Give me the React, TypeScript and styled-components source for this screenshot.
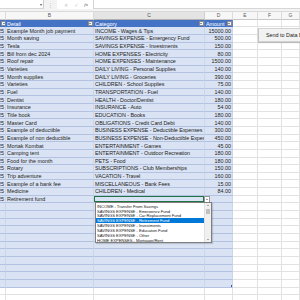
import React from 'react';
import styled, { createGlobalStyle, css } from 'styled-components';

const Global = createGlobalStyle`
  html, body { margin: 0; padding: 0; background: #ffffff; }
  body { font-family: "Liberation Sans", Arial, sans-serif; overflow: hidden; }
`;

const COLS = '6px 88px 111px 28px 25px 24px 1fr';
const ROW_H = 7.67;

type Entry = { detail: string; category: string; amount: string };

const entries: Entry[] = [
  { detail: 'Example Month job payment', category: 'INCOME - Wages & Tips', amount: '15000.00' },
  { detail: 'Month saving', category: 'SAVINGS EXPENSE - Emergency Fund', amount: '500.00' },
  { detail: 'Tesla', category: 'SAVINGS EXPENSE - Investments', amount: '150.00' },
  { detail: 'Bill from dec 2024', category: 'HOME EXPENSES - Electricity', amount: '80.00' },
  { detail: 'Roof repair', category: 'HOME EXPENSES - Maintenance', amount: '1500.00' },
  { detail: 'Varieties', category: 'DAILY LIVING - Personal Supplies', amount: '140.00' },
  { detail: 'Month supplies', category: 'DAILY LIVING - Groceries', amount: '390.00' },
  { detail: 'Varieties', category: 'CHILDREN - School Supplies', amount: '75.00' },
  { detail: 'Fuel', category: 'TRANSPORTATION - Fuel', amount: '140.00' },
  { detail: 'Dentist', category: 'HEALTH - Doctor/Dentist', amount: '180.00' },
  { detail: 'Insurance', category: 'INSURANCE - Auto', amount: '54.00' },
  { detail: 'Title book', category: 'EDUCATION - Books', amount: '180.00' },
  { detail: 'Master Card', category: 'OBLIGATIONS - Credit Card Debt', amount: '140.00' },
  { detail: 'Example of deductible', category: 'BUSINESS EXPENSE - Deductible Expenses', amount: '300.00' },
  { detail: 'Example of non deductible', category: 'BUSINESS EXPENSE - Non-Deductible Expense', amount: '450.00' },
  { detail: 'Mortak Kombat', category: 'ENTERTAINMENT - Games', amount: '45.00' },
  { detail: 'Camping tent', category: 'ENTERTAINMENT - Outdoor Recreation', amount: '180.00' },
  { detail: 'Food for the month', category: 'PETS - Food', amount: '180.00' },
  { detail: 'Rotary', category: 'SUBSCRIPTIONS - Club Memberships', amount: '150.00' },
  { detail: 'Trip adventure', category: 'VACATION - Travel', amount: '160.00' },
  { detail: 'Example of  a bank fee', category: 'MISCELLANEOUS - Bank Fees', amount: '15.00' },
  { detail: 'Medicine', category: 'CHILDREN - Medical', amount: '84.00' },
  { detail: 'Retirement fund', category: '', amount: '' },
];

const options = [
  'INCOME - Transfer From Savings',
  'SAVINGS EXPENSE - Emergency Fund',
  'SAVINGS EXPENSE - Car Replacement Fund',
  'SAVINGS EXPENSE - Retirement Fund',
  'SAVINGS EXPENSE - Investments',
  'SAVINGS EXPENSE - Education Fund',
  'SAVINGS EXPENSE - Other',
  'HOME EXPENSES - Mortgage/Rent',
];

const EMPTY_TABLE_ROWS = 11;
const PLAIN_ROWS = 2;

const Screen = styled.div`
  position: relative;
  width: 300px;
  height: 300px;
  overflow: hidden;
  background: #ffffff;
  color: #1c1c1c;
  font-family: "Liberation Sans", Arial, sans-serif;
`;

/* ---------- formula bar ---------- */
const FormulaBar = styled.div`
  display: flex;
  height: 11.5px;
  box-sizing: border-box;
  padding-bottom: 1.5px;
  background: #f3f3f3;
  border-bottom: 1px solid #dadada;
`;

const NameBox = styled.div`
  width: 44px;
  background: #ffffff;
  border-right: 1px solid #cfcfcf;
  border-bottom: 1px solid #d6d6d6;
  display: flex;
  justify-content: flex-end;
  align-items: center;
  padding-right: 1px;
  box-sizing: border-box;
  font-size: 4px;
  color: #555;
`;

const Grip = styled.div`
  width: 13px;
  display: flex;
  justify-content: center;
  align-items: center;
  font-size: 5px;
  color: #b5b5b5;
`;

const FxBox = styled.div`
  width: 37px;
  background: #ffffff;
  border-right: 1px solid #d3d3d3;
  display: flex;
  align-items: center;
  justify-content: space-around;
  padding: 0 2px 0 4px;
  box-sizing: border-box;
  font-size: 5px;
`;

const FxIcon = styled.span<{ $dim?: boolean }>`
  color: ${p => (p.$dim ? '#c4c4c4' : '#555')};
  font-style: ${p => (p.$dim ? 'normal' : 'italic')};
  font-family: ${p => (p.$dim ? '"DejaVu Sans", sans-serif' : '"Liberation Serif", serif')};
`;

const FormulaInput = styled.div`
  flex: 1;
  background: #ffffff;
  border-bottom: 1px solid #d6d6d6;
`;

/* ---------- grid ---------- */
const Sheet = styled.div`
  display: flex;
  flex-direction: column;
`;

const GridRow = styled.div<{ $h?: number }>`
  display: grid;
  grid-template-columns: ${COLS};
  height: ${p => p.$h ?? ROW_H}px;
`;

type Tone = 'letter' | 'letterActive' | 'head' | 'body' | 'plain';

const Cell = styled.div<{
  $tone: Tone;
  $align?: 'left' | 'right' | 'center';
  $active?: boolean;
  $tight?: boolean;
  $handle?: boolean;
}>`
  position: relative;
  box-sizing: border-box;
  display: flex;
  align-items: center;
  white-space: nowrap;
  overflow: hidden;
  font-size: 5.4px;
  padding: 0 1px;
  letter-spacing: ${p => (p.$tight ? '-0.06px' : 'normal')};
  justify-content: ${p => (p.$align === 'right' ? 'flex-end' : p.$align === 'center' ? 'center' : 'flex-start')};
  ${p => p.$tone === 'letter' && css`
    background: #f7f7f7;
    color: #5a5a5a;
    border-right: 1px solid #dcdcdc;
    border-bottom: 1px solid #c8c8c8;
    font-size: 5px;
  `}
  ${p => p.$tone === 'letterActive' && css`
    background: #e4e4e4;
    color: #4a4a4a;
    border-right: 1px solid #d0d0d0;
    border-bottom: 1px solid #b0b0b0;
    font-size: 5px;
  `}
  ${p => p.$tone === 'head' && css`
    background: #4472c4;
    color: #ffffff;
    border-right: 1px solid #5a82c9;
    justify-content: space-between;
    padding: 0 0 0 1px;
  `}
  ${p => p.$tone === 'body' && css`
    background: #dae3f3;
    border-bottom: 1px solid #b3c2e0;
    border-right: 1px solid #cbd6ec;
  `}
  ${p => p.$tone === 'plain' && css`
    background: #ffffff;
    border-bottom: 1px solid #e2e2e2;
    border-right: 1px solid #e2e2e2;
  `}
  ${p => p.$active && css`
    overflow: visible;
    z-index: 3;
    box-shadow: inset 0 0 0 1px #217346;
  `}
  ${p => p.$handle && css`
    overflow: visible;
  `}
`;

const FilterButton = styled.span`
  flex: none;
  width: 5px;
  height: 5px;
  margin-right: 0.5px;
  background: #f2f2f2;
  border: 0.5px solid #8c8c8c;
  box-sizing: border-box;
  display: flex;
  align-items: center;
  justify-content: center;
  &::after {
    content: '';
    border-left: 1.2px solid transparent;
    border-right: 1.2px solid transparent;
    border-top: 1.4px solid #333;
  }
`;

const HeadLabel = styled.span`
  overflow: hidden;
`;

/* ---------- data-validation dropdown ---------- */
const ListArrow = styled.div`
  position: absolute;
  left: 100%;
  top: 0.5px;
  width: 6px;
  height: 6.5px;
  box-sizing: border-box;
  background: #ffffff;
  border: 0.5px solid #9a9a9a;
  display: flex;
  align-items: center;
  justify-content: center;
  &::after {
    content: '';
    border-left: 1.2px solid transparent;
    border-right: 1.2px solid transparent;
    border-top: 1.4px solid #444;
  }
`;

const ListBox = styled.div`
  position: absolute;
  top: 100%;
  left: 1px;
  width: 116.5px;
  height: 41px;
  box-sizing: border-box;
  background: #ffffff;
  border: 0.5px solid #7f7f7f;
  box-shadow: 1px 1px 1px rgba(0, 0, 0, 0.15);
  display: flex;
`;

const ListItems = styled.div`
  flex: 1;
  display: flex;
  flex-direction: column;
  padding-top: 0.3px;
`;

const ListItem = styled.div<{ $selected?: boolean }>`
  height: 5.05px;
  display: flex;
  align-items: center;
  padding-left: 1px;
  font-size: 4.2px;
  color: ${p => (p.$selected ? '#ffffff' : '#222')};
  background: ${p => (p.$selected ? '#0078d7' : 'transparent')};
  white-space: nowrap;
  overflow: hidden;
`;

const ScrollTrack = styled.div`
  width: 6px;
  display: flex;
  flex-direction: column;
  align-items: center;
  background: #f0f0f0;
  border-left: 0.5px solid #e0e0e0;
`;

const ScrollArrow = styled.div<{ $up?: boolean }>`
  height: 5px;
  display: flex;
  align-items: center;
  justify-content: center;
  &::after {
    content: '';
    border-left: 1.3px solid transparent;
    border-right: 1.3px solid transparent;
    ${p => (p.$up ? 'border-bottom: 1.3px solid #606060;' : 'border-top: 1.3px solid #606060;')}
  }
`;

const ScrollThumb = styled.div`
  width: 4px;
  height: 5px;
  margin-top: 1px;
  background: #c1c1c1;
`;

const ScrollSpacer = styled.div`
  flex: 1;
`;

/* ---------- form button ---------- */
const SendButton = styled.div`
  position: absolute;
  left: 258px;
  top: 28px;
  width: 60px;
  height: 14px;
  box-sizing: border-box;
  background: #f2f2f2;
  border: 1px solid #d2d2d2;
  border-left-color: #c4c4c4;
  box-shadow: 0 1px 1px rgba(0, 0, 0, 0.18);
  display: flex;
  align-items: center;
  padding-left: 7px;
  font-size: 5.4px;
  color: #222;
  white-space: nowrap;
`;

const ResizeHandle = styled.div`
  position: absolute;
  right: 0;
  bottom: 0;
  width: 1.5px;
  height: 1.5px;
  background: #3a5a96;
`;

const letters = ['', 'B', 'C', 'D', 'E', 'F', 'G'];

const PlainTail: React.FC = () => (
  <>
    <Cell $tone="plain" />
    <Cell $tone="plain" />
    <Cell $tone="plain" />
  </>
);

export default function App() {
  return (
    <Screen>
      <Global />
      <FormulaBar>
        <NameBox>▾</NameBox>
        <Grip>⋮</Grip>
        <FxBox>
          <FxIcon $dim>✕</FxIcon>
          <FxIcon $dim>✓</FxIcon>
          <FxIcon>fx</FxIcon>
        </FxBox>
        <FormulaInput />
      </FormulaBar>

      <Sheet>
        <GridRow $h={8.2}>
          {letters.map((l, i) => (
            <Cell key={i} $tone={l === 'C' ? 'letterActive' : 'letter'} $align="center">
              {l}
            </Cell>
          ))}
        </GridRow>

        <GridRow>
          <Cell $tone="head">
            <HeadLabel />
            <FilterButton />
          </Cell>
          <Cell $tone="head">
            <HeadLabel>Detail</HeadLabel>
            <FilterButton />
          </Cell>
          <Cell $tone="head">
            <HeadLabel>Category</HeadLabel>
            <FilterButton />
          </Cell>
          <Cell $tone="head">
            <HeadLabel>Amount</HeadLabel>
            <FilterButton />
          </Cell>
          <PlainTail />
        </GridRow>

        {entries.map((e, i) => {
          const active = i === entries.length - 1;
          return (
            <GridRow key={i}>
              <Cell $tone="body" $align="right">25</Cell>
              <Cell $tone="body">{e.detail}</Cell>
              <Cell $tone="body" $active={active} $tight>
                {e.category}
                {active && (
                  <>
                    <ListArrow />
                    <ListBox>
                      <ListItems>
                        {options.map((o, j) => (
                          <ListItem key={o} $selected={j === 3}>
                            {o}
                          </ListItem>
                        ))}
                      </ListItems>
                      <ScrollTrack>
                        <ScrollArrow $up />
                        <ScrollThumb />
                        <ScrollSpacer />
                        <ScrollArrow />
                      </ScrollTrack>
                    </ListBox>
                  </>
                )}
              </Cell>
              <Cell $tone="body" $align="right">{e.amount}</Cell>
              <PlainTail />
            </GridRow>
          );
        })}

        {Array.from({ length: EMPTY_TABLE_ROWS }).map((_, i) => (
          <GridRow key={`e${i}`}>
            <Cell $tone="body" />
            <Cell $tone="body" />
            <Cell $tone="body" />
            <Cell $tone="body" $handle={i === EMPTY_TABLE_ROWS - 1}>
              {i === EMPTY_TABLE_ROWS - 1 && <ResizeHandle />}
            </Cell>
            <PlainTail />
          </GridRow>
        ))}

        {Array.from({ length: PLAIN_ROWS }).map((_, i) => (
          <GridRow key={`p${i}`}>
            {letters.map((_, j) => (
              <Cell key={j} $tone="plain" />
            ))}
          </GridRow>
        ))}
      </Sheet>

      <SendButton>Send to Data Base</SendButton>
    </Screen>
  );
}
